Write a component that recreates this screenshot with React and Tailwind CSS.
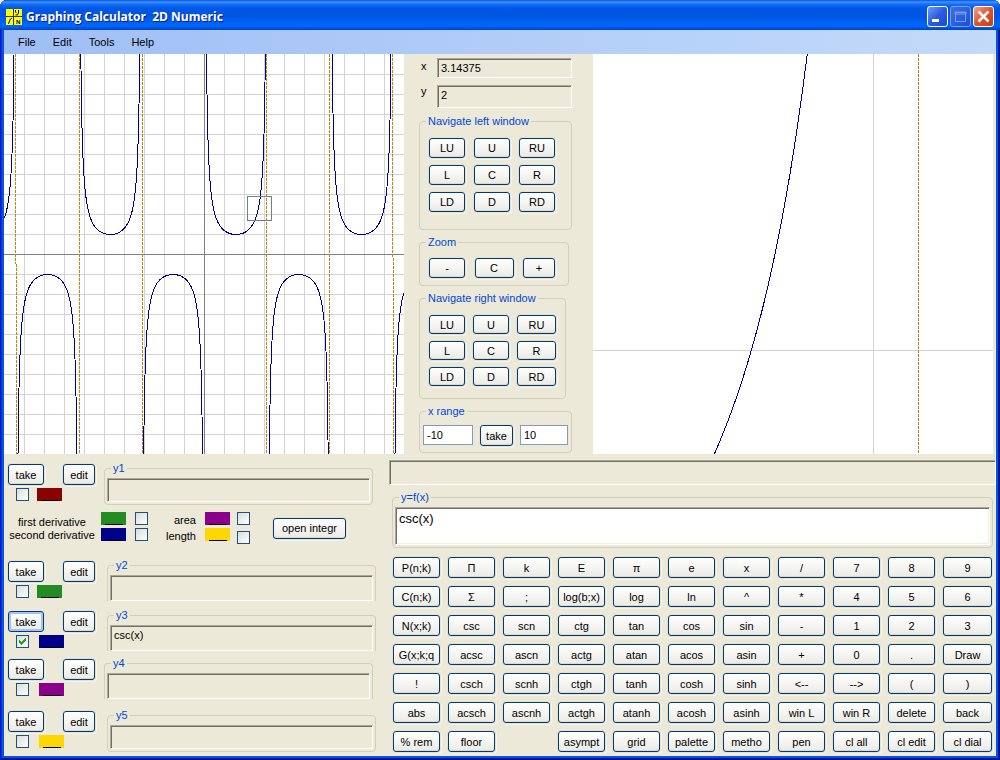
import clsx from 'clsx';
import { useState } from 'react';

const menuItems = ['File', 'Edit', 'Tools', 'Help'];

const navKeys = ['LU', 'U', 'RU', 'L', 'C', 'R', 'LD', 'D', 'RD'];

const keypad = [
  ['P(n;k)', 'Π', 'k', 'E', 'π', 'e', 'x', '/', '7', '8', '9'],
  ['C(n;k)', 'Σ', ';', 'log(b;x)', 'log', 'ln', '^', '*', '4', '5', '6'],
  ['N(x;k)', 'csc', 'scn', 'ctg', 'tan', 'cos', 'sin', '-', '1', '2', '3'],
  ['G(x;k;q', 'acsc', 'ascn', 'actg', 'atan', 'acos', 'asin', '+', '0', '.', 'Draw'],
  ['!', 'csch', 'scnh', 'ctgh', 'tanh', 'cosh', 'sinh', '<--', '-->', '(', ')'],
  ['abs', 'acsch', 'ascnh', 'actgh', 'atanh', 'acosh', 'asinh', 'win L', 'win R', 'delete', 'back'],
  ['% rem', 'floor', '', 'asympt', 'grid', 'palette', 'metho', 'pen', 'cl all', 'cl edit', 'cl dial'],
];

// csc(x) as a path, split at every pole
function cscPath({ left, top, scale, size }) {
  const limit = size * 2;
  let d = '';
  let pen = 'M';
  let lastSign = 0;
  for (let px = 0; px <= size; px += 0.25) {
    const sin = Math.sin(left + px / scale);
    const sign = Math.sign(sin);
    const py = (top - 1 / sin) * scale;
    if (sign !== lastSign) pen = 'M';
    lastSign = sign;
    if (!Number.isFinite(py) || Math.abs(py) > limit) {
      pen = 'M';
      continue;
    }
    // half a pixel puts the stroke in the middle of its pixel
    d += `${pen}${(px + 0.5).toFixed(2)} ${(py + 0.5).toFixed(2)}`;
    pen = 'L';
  }
  return d;
}

const leftCurve = cscPath({ left: -10, top: 10, scale: 20, size: 400 });
const rightCurve = cscPath({ left: 3 - 280 / 320, top: 2 + 296 / 320, scale: 320, size: 400 });
const gridLines = Array.from({ length: 19 }, (_, i) => (i + 1) * 20 + 0.5);

function Asymptote({ d }) {
  return <path d={d} stroke="#b8860b" strokeDasharray="3 1" fill="none" />;
}

function LeftPlot() {
  return (
    <svg
      viewBox="0 0 400 400"
      shapeRendering="crispEdges"
      className="block aspect-square min-w-0 flex-1 bg-white"
    >
      {gridLines.map((p) => (
        <path key={p} d={`M${p} 0V400M0 ${p}H400`} stroke="#d3d3d3" />
      ))}
      <path d="M200.5 0V400M0 200.5H400" stroke="#808080" />
      <Asymptote d="M11.5 0V210" />
      <Asymptote d="M12.5 210V400" />
      <Asymptote d="M75.5 0V400" />
      <Asymptote d="M138.5 0V400" />
      <Asymptote d="M262.5 0V400" />
      <Asymptote d="M325.5 0V400" />
      <Asymptote d="M388.5 0V204" />
      <Asymptote d="M389.5 204V400" />
      <path d={leftCurve} stroke="#00008b" fill="none" />
      <rect x="243.5" y="142.5" width="24" height="24" stroke="#708090" fill="none" />
    </svg>
  );
}

function RightPlot() {
  return (
    <svg
      viewBox="0 0 400 400"
      shapeRendering="crispEdges"
      className="block aspect-square min-w-0 flex-1 bg-white"
    >
      <path d="M280.5 0V400M0 296.5H400" stroke="#d3d3d3" />
      <Asymptote d="M325.5 0V400" />
      <path d={rightCurve} stroke="#00008b" fill="none" />
    </svg>
  );
}

function XpButton({ className, active = false, children }) {
  return (
    <button
      type="button"
      className={clsx(
        'flex items-center justify-center whitespace-nowrap rounded-[3px] border border-[#003c74] bg-linear-to-b from-white to-[#ebeae4]',
        active
          ? 'shadow-[inset_0_0_0_2px_#a5c2f3]'
          : 'shadow-[inset_0_-1px_0_#dcd8cd,0_0_0_1px_#e4e1d3,1px_1px_0_1px_#f6f4ea]',
        className,
      )}
    >
      {children}
    </button>
  );
}

function SunkenInput({ className, ...props }) {
  return (
    <input
      type="text"
      className={clsx(
        'block border border-t-[#aca899] border-r-white border-b-white border-l-[#aca899] px-[3px] shadow-[inset_1px_1px_0_#716f64] outline-none',
        className,
      )}
      {...props}
    />
  );
}

function Group({ title, htmlFor, className, bodyClass, children }) {
  return (
    <fieldset className={clsx('min-w-0 rounded-[4px] border border-[#d0d0bf]', className)}>
      <legend className="ml-1.5 px-0.5 text-[#0046d5]">
        {htmlFor ? <label htmlFor={htmlFor}>{title}</label> : title}
      </legend>
      <div className={bodyClass}>{children}</div>
    </fieldset>
  );
}

function Tick({ id, label, defaultChecked = false }) {
  const [checked, setChecked] = useState(defaultChecked);

  return (
    <span className="relative block h-[13px] w-[13px] shrink-0">
      <input
        id={id}
        type="checkbox"
        aria-label={label}
        checked={checked}
        onChange={(event) => setChecked(event.target.checked)}
        className="block h-[13px] w-[13px] appearance-none border border-[#1c5180] bg-linear-to-br from-[#dcdcd7] to-white"
      />
      {checked ? (
        <svg
          viewBox="0 0 13 13"
          shapeRendering="crispEdges"
          className="pointer-events-none absolute inset-0 h-[13px] w-[13px]"
        >
          <path
            d="M3 5h1v1h1v1h1v-1h1v-1h1v-1h1v-1h1v3h-1v1h-1v1h-1v1h-1v1h-1v-1h-1v-1h-1z"
            fill="#21a121"
          />
        </svg>
      ) : null}
    </span>
  );
}

function Swatch({ color, label }) {
  return (
    <button
      type="button"
      aria-label={label}
      className={clsx('flex h-[13px] w-[25px] shrink-0 items-end justify-center', color)}
    >
      <span className="h-px w-[18px] bg-black" />
    </button>
  );
}

function FunctionRow({ name, color, value = '', checked, active, className, checkGap, groupClass, bodyClass, inputClass }) {
  return (
    <div className={clsx('flex', className)}>
      <div className="w-[87px] shrink-0 pt-0.5">
        <div className="flex justify-between">
          <XpButton className="h-[21px] w-9" active={active}>take</XpButton>
          <XpButton className="h-[21px] w-8">edit</XpButton>
        </div>
        <div className={clsx('mt-[3px] flex pl-2', checkGap)}>
          <Tick label={`show ${name}`} defaultChecked={checked} />
          <Swatch color={color} label={`${name} color`} />
        </div>
      </div>
      <Group
        title={name}
        htmlFor={name}
        className={clsx('w-[269px]', groupClass)}
        bodyClass={clsx('px-0.5 pt-1', bodyClass)}
      >
        <SunkenInput id={name} defaultValue={value} className={clsx('w-full pb-1.5', inputClass)} />
      </Group>
    </div>
  );
}

function TitleIcon() {
  return (
    <svg viewBox="0 0 16 16" className="h-4 w-4">
      <rect width="16" height="16" fill="#ffff00" />
      <path d="M7.5 0v16M0 7.500h16" stroke="#303030" shapeRendering="crispEdges" />
      <path d="M9.5 1v2l1 1M12.5 1v3l-1 2h-2M2.5 15l1-3 1-2 1.5-1" stroke="#000080" fill="none" />
      <text x="10" y="15" fontSize="6" fontWeight="bold" fontFamily="Liberation Sans" fill="#000080">
        N
      </text>
    </svg>
  );
}

function TitleBar() {
  return (
    <header className="flex h-[30px] items-center rounded-t-[7px] bg-[linear-gradient(to_bottom,#0a4fd8_0,#3d95ff_2px,#1573f8_4px,#0058e6_8px,#0055e0_16px,#0063f5_23px,#0066ff_26px,#0042c4_30px)] px-1.5 pt-[3px]">
      <TitleIcon />
      <h1 className="ml-1 flex-1 font-['Open_Sans'] text-[12px] font-bold text-white [text-shadow:1px_1px_0_#0a1f80]">
        Graphing Calculator&nbsp; 2D Numeric
      </h1>
      <div className="flex gap-0.5">
        <button
          type="button"
          aria-label="Minimize"
          className="h-[21px] w-[21px] rounded-[3px] border border-white bg-linear-to-br from-[#6f9bf5] via-[#2a5be0] to-[#1c4ad0]"
        >
          <svg viewBox="0 0 19 19" className="h-full w-full">
            <path d="M4 12h7v3h-7z" fill="#fff" />
          </svg>
        </button>
        <button
          type="button"
          aria-label="Maximize"
          className="h-[21px] w-[21px] rounded-[3px] border border-[#7f9fea] bg-linear-to-br from-[#3a6fe6] to-[#1a50d8]"
        >
          <svg viewBox="0 0 19 19" className="h-full w-full">
            <path d="M4.5 5.5h10v9h-10zM4 5h11v2H4z" stroke="#7d9df0" fill="none" />
          </svg>
        </button>
        <button
          type="button"
          aria-label="Close"
          className="h-[21px] w-[21px] rounded-[3px] border border-white bg-linear-to-br from-[#f0a088] via-[#e0542c] to-[#c63c14]"
        >
          <svg viewBox="0 0 19 19" className="h-full w-full">
            <path d="M4.5 4.5l10 10M14.5 4.5l-10 10" stroke="#fff" strokeWidth="2.5" />
          </svg>
        </button>
      </div>
    </header>
  );
}

function ControlColumn() {
  return (
    <div className="w-[189px] shrink-0 pt-1 pl-[15px]">
      <div className="flex w-[153px]">
        <label htmlFor="pos-x" className="w-[18px] pt-0.5 pl-0.5">x</label>
        <SunkenInput id="pos-x" defaultValue="3.14375" className="h-5 w-[135px]" />
      </div>
      <div className="mt-[7px] flex w-[153px]">
        <label htmlFor="pos-y" className="w-[18px] pl-0.5">y</label>
        <SunkenInput id="pos-y" defaultValue="2" className="h-[23px] w-[135px] pb-1" />
      </div>

      <Group title="Navigate left window" className="mt-[7px] w-[153px]" bodyClass="px-[9px] pt-[11px] pb-[17px]">
        <div className="grid grid-cols-[repeat(3,36px)] gap-x-[9px] gap-y-[7px]">
          {navKeys.map((key) => (
            <XpButton key={key} className="h-5">{key}</XpButton>
          ))}
        </div>
      </Group>

      <Group title="Zoom" className="mt-1.5 w-[150px]" bodyClass="px-[9px] pt-2.5 pb-[7px]">
        <div className="flex w-[126px] justify-between">
          <XpButton className="h-5 w-9">-</XpButton>
          <XpButton className="h-5 w-[39px]">C</XpButton>
          <XpButton className="h-5 w-8">+</XpButton>
        </div>
      </Group>

      <Group title="Navigate right window" className="mt-1.5 w-[147px]" bodyClass="px-[9px] pt-[11px] pb-3">
        <div className="grid grid-cols-[36px_36px_39px] gap-x-2 gap-y-[7px]">
          {navKeys.map((key) => (
            <XpButton key={key} className="h-[19px]">{key}</XpButton>
          ))}
        </div>
      </Group>

      <Group title="x range" className="mt-1.5 w-[153px]" bodyClass="px-[3px] pt-2 pb-1.5">
        <div className="flex gap-[7px]">
          <input
            type="text"
            aria-label="x from"
            defaultValue="-10"
            className="h-5 w-[50px] border border-[#7f9db9] bg-white px-[3px] outline-none"
          />
          <XpButton className="h-[21px] w-[34px]">take</XpButton>
          <input
            type="text"
            aria-label="x to"
            defaultValue="10"
            className="h-5 w-12 border border-[#7f9db9] bg-white px-[3px] outline-none"
          />
        </div>
      </Group>
    </div>
  );
}

function FunctionList() {
  return (
    <div className="w-[385px] shrink-0 pt-2 pl-1">
      <FunctionRow
        name="y1"
        color="bg-[#8b0000]"
        checkGap="gap-2"
        groupClass="ml-[9px]"
        bodyClass="pb-0.5"
        inputClass="h-6"
      />

      <div className="mt-[7px] flex h-8">
        <div className="flex w-[88px] flex-col justify-end pb-0.5 text-center leading-[13px]">
          <label htmlFor="first">first derivative</label>
          <label htmlFor="second">second derivative</label>
        </div>
        <div className="ml-[5px] flex flex-col gap-[3px]">
          <Swatch color="bg-[#228b22]" label="first derivative color" />
          <Swatch color="bg-[#00008b]" label="second derivative color" />
        </div>
        <div className="ml-[9px] flex flex-col gap-[3px]">
          <Tick id="first" />
          <Tick id="second" />
        </div>
        <div className="w-12 text-right leading-4">
          <label htmlFor="area" className="block">area</label>
          <label htmlFor="length" className="block">length</label>
        </div>
        <div className="ml-[9px] flex flex-col gap-[3px]">
          <Swatch color="bg-[#8b008b]" label="area color" />
          <Swatch color="bg-[#ffd700]" label="length color" />
        </div>
        <div className="ml-[7px] flex flex-col justify-between">
          <Tick id="area" />
          <Tick id="length" />
        </div>
        <XpButton className="ml-[23px] h-[21px] w-[73px] self-center">open integr</XpButton>
      </div>

      <FunctionRow
        name="y2"
        color="bg-[#228b22]"
        className="mt-[15px]"
        checkGap="gap-2"
        groupClass="ml-3 border-b-0 rounded-b-none"
        inputClass="h-[26px]"
      />
      <FunctionRow
        name="y3"
        color="bg-[#00008b]"
        value="csc(x)"
        checked
        active
        className="mt-2"
        checkGap="gap-2.5"
        groupClass="ml-3 border-b-0 rounded-b-none"
        inputClass="h-[26px]"
      />
      <FunctionRow
        name="y4"
        color="bg-[#8b008b]"
        className="mt-1.5"
        checkGap="gap-2.5"
        groupClass="ml-[9px] border-b-0 rounded-b-none"
        inputClass="h-[26px]"
      />
      <FunctionRow
        name="y5"
        color="bg-[#ffd700]"
        className="mt-2.5"
        checkGap="gap-2.5"
        groupClass="ml-3"
        bodyClass="pb-0.5"
        inputClass="h-6"
      />
    </div>
  );
}

function EntryPanel() {
  return (
    <div className="min-w-0 flex-1 pt-1.5">
      <SunkenInput aria-label="Result" readOnly className="h-[25px] w-full" />
      <Group title="y=f(x)" htmlFor="formula" className="mx-[3px] mt-1.5" bodyClass="px-0.5 pt-1 pb-0.5">
        <textarea
          id="formula"
          defaultValue="csc(x)"
          className="block h-[38px] w-full resize-none border border-t-[#aca899] border-r-white border-b-white border-l-[#aca899] bg-white px-[3px] pt-[3px] text-[13px] leading-4 shadow-[inset_1px_1px_0_#716f64,inset_-1px_-1px_0_#f1efe2] outline-none"
        />
      </Group>
      <div className="mx-1 mt-[9px] grid grid-cols-[repeat(10,minmax(0,1fr))_49px] gap-2">
        {keypad.flat().map((key, i) =>
          key ? <XpButton key={i} className="h-[21px]">{key}</XpButton> : <span key={i} />,
        )}
      </div>
    </div>
  );
}

export default function App() {
  return (
    <div className="flex min-h-screen flex-col rounded-t-[7px] bg-[#0855dd] font-['Liberation_Sans',sans-serif] text-[11px] leading-3 text-black shadow-[inset_1px_0_0_#0019cf,inset_-1px_-1px_0_#00138c,inset_2px_0_0_#0831d9,inset_-2px_-2px_0_#001ea0]">
      <TitleBar />
      <div className="mx-1 mb-1 flex flex-1 flex-col bg-[#ece9d8]">
        <nav className="flex h-6 items-center gap-[17px] bg-linear-to-r from-[#9ebef5] to-[#c4daf9] pl-3.5">
          {menuItems.map((item) => (
            <button key={item} type="button">{item}</button>
          ))}
        </nav>
        <main>
          <section className="flex pr-[3px]">
            <LeftPlot />
            <ControlColumn />
            <RightPlot />
          </section>
          <section className="flex">
            <FunctionList />
            <EntryPanel />
          </section>
        </main>
      </div>
    </div>
  );
}
